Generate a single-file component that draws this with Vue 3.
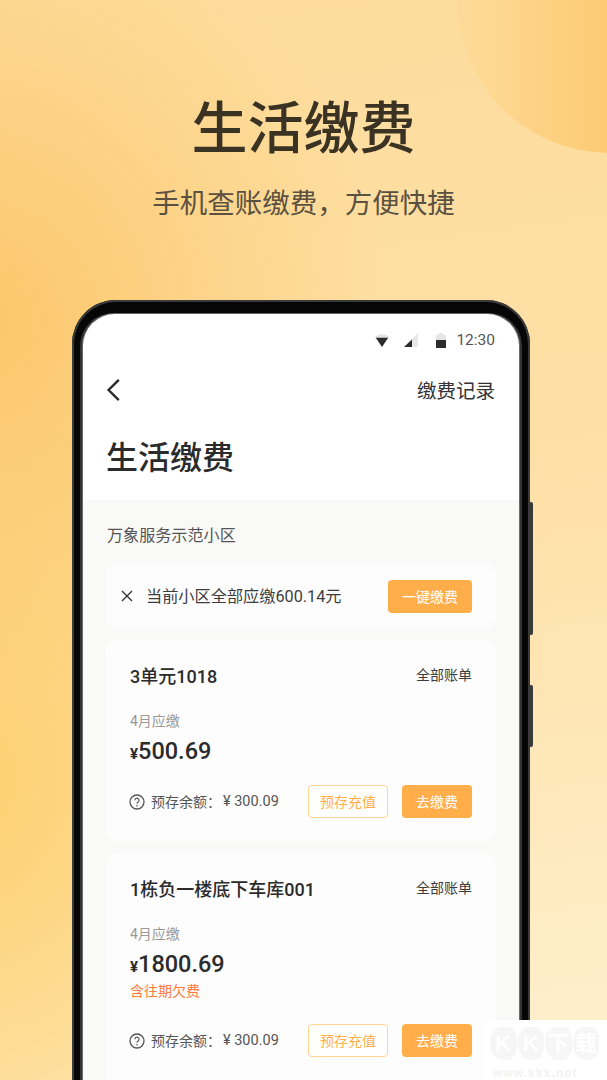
<script setup>
const cards = [
  { name: '3单元1018', amount: '500.69', overdue: false },
  { name: '1栋负一楼底下车库001', amount: '1800.69', overdue: true },
]
const markChars = ['K', 'K', '下', '载']
</script>

<template>
  <div class="page">
    <div class="sun"></div>
    <header class="hero">
      <h1>生活缴费</h1>
      <p>手机查账缴费&#65292;方便快捷</p>
    </header>
    <div class="phone">
      <i class="key key-a"></i>
      <i class="key key-b"></i>
      <div class="screen">
        <div class="status">
          <svg width="14" height="13" viewBox="0 0 14 13"><path d="M0 3C4-.6 10-.6 14 3l-1 1.500H1z" fill="#e4e4e4"/><path d="M.8 3.800h12.400L7 13z" fill="#2c2c2c"/></svg>
          <svg class="signal" width="14" height="14" viewBox="0 0 14 14"><path d="M14 0v14H0z" fill="#e8e8e8"/><path d="M8 6.500V14H0z" fill="#2c2c2c"/></svg>
          <svg class="battery" width="10" height="15" viewBox="0 0 10 15"><path d="M3 0h4v2h3v13H0V2h3z" fill="#e4e4e4"/><path d="M0 7h10v8H0z" fill="#2c2c2c"/></svg>
          <span class="time">12:30</span>
        </div>
        <nav class="nav">
          <svg width="14" height="24" viewBox="0 0 14 24"><path d="M12.800 1.800L2.600 12l10.200 10.200" fill="none" stroke="#2a2a2a" stroke-width="2.400"/></svg>
          <span>缴费记录</span>
        </nav>
        <h2 class="title">生活缴费</h2>
        <section class="body">
          <div class="community">万象服务示范小区</div>
          <div class="card notice">
            <svg width="12" height="12" viewBox="0 0 12 12"><path d="M1 1l10 10M11 1L1 11" stroke="#333" stroke-width="1.400"/></svg>
            <span class="notice-text">当前小区全部应缴600.14元</span>
            <button class="btn solid wide">一键缴费</button>
          </div>
          <article v-for="c in cards" :key="c.name" class="card bill" :class="{ tall: c.overdue }">
            <div class="bill-head">
              <strong>{{ c.name }}</strong>
              <span>全部账单</span>
            </div>
            <div class="month">4月应缴</div>
            <div class="amount"><small>¥</small>{{ c.amount }}</div>
            <div v-if="c.overdue" class="overdue">含往期欠费</div>
            <div class="bill-foot">
              <svg class="help" width="16" height="16" viewBox="0 0 16 16"><circle cx="8" cy="8" r="7" fill="none" stroke="#555" stroke-width="1.300"/><path d="M5.900 6.300a2.100 2.100 0 1 1 3.300 1.700c-.8.500-1.200.9-1.200 1.700" fill="none" stroke="#555" stroke-width="1.200"/><circle cx="8" cy="11.700" r=".8" fill="#555"/></svg>
              <span class="balance">预存余额&#65306;</span>
              <span class="balance-num">¥ 300.09</span>
              <button class="btn ghost">预存充值</button>
              <button class="btn solid">去缴费</button>
            </div>
          </article>
        </section>
      </div>
    </div>
    <div class="mark">
      <div class="mark-row">
        <span v-for="(m, i) in markChars" :key="i" class="blob">{{ m }}</span>
      </div>
      <div class="mark-url">www.kkx.net</div>
    </div>
  </div>
</template>

<style>
html, body { margin: 0; }
</style>

<style scoped>
.page {
  position: relative;
  width: 607px;
  height: 1080px;
  overflow: hidden;
  font-family: Roboto, "Noto Sans CJK SC", sans-serif;
  background:
    radial-gradient(ellipse 420px 420px at -30px 320px, #fcc66a 0%, rgba(252, 200, 110, .65) 40%, rgba(253, 215, 140, 0) 100%),
    radial-gradient(ellipse 420px 560px at -30px 780px, #fdd071 0%, rgba(253, 212, 124, .7) 45%, rgba(253, 224, 164, 0) 100%),
    linear-gradient(172deg, #fddc9c 0%, #fee1a8 50%, #fef0cf 100%);
}
.sun {
  position: absolute;
  left: 457px;
  top: -153px;
  width: 306px;
  height: 306px;
  border-radius: 50%;
  background: linear-gradient(90deg, #fedb9a 0%, #fdca72 50%);
}
.hero { position: relative; padding-top: 93px; text-align: center; color: #3a3222; }
.hero h1 { margin: 0; font-size: 56px; line-height: 72px; font-weight: 500; }
.hero p { margin: 19px 0 0; font-size: 27.500px; line-height: 40px; color: #5b5140; font-weight: 400; }
.phone {
  position: relative;
  margin: 76px 0 0 72px;
  width: 458px;
  height: 900px;
  box-sizing: border-box;
  padding: 14px 11px 0;
  background: #060606;
  border-radius: 44px 44px 0 0;
  box-shadow: inset 0 0 0 2px #3a3a3a;
}
.key { position: absolute; right: -3px; width: 3px; background: #3a3a3a; border-radius: 0 2px 2px 0; }
.key-a { top: 202px; height: 133px; }
.key-b { top: 385px; height: 62px; }
.screen { height: 100%; background: #fff; border-radius: 32px 32px 0 0; overflow: hidden; color: #2b2b2b; box-shadow: 0 0 0 1px #6a6a6a, 0 1px 0 1px #6a6a6a, 2px 0 0 1px #333, -2px 0 0 1px #333; }
.status { height: 52px; padding: 0 24px 0 0; display: flex; align-items: center; justify-content: flex-end; box-sizing: border-box; }
.signal { margin-left: 15px; }
.battery { margin-left: 18px; }
.time { margin-left: 10px; font: 400 15.500px/20px Roboto, sans-serif; color: #555; }
.nav { height: 48px; display: flex; align-items: center; justify-content: space-between; padding: 0 24px 0 23px; font-size: 19.500px; color: #333; }
.nav span { padding-bottom: 2px; }
.title { margin: 22px 0 0 23px; font-size: 32px; line-height: 44px; font-weight: 500; color: #2b2b2b; }
.body { margin-top: 20px; padding: 24px 23px 0; background: #f9f9f7; height: 600px; }
.community { margin-left: 1px; font-size: 16.100px; line-height: 24px; color: #555; }
.card { background: #fdfdfd; border-radius: 12px; box-sizing: border-box; }
.notice { margin-top: 15px; height: 66px; padding: 0 24px 0 15px; display: flex; align-items: center; }
.notice-text { margin-left: 13px; padding-bottom: 2px; flex: 1; font-size: 16.200px; color: #3d3d3d; }
.btn { box-sizing: border-box; height: 33px; border: 0; border-radius: 4px; padding: 0 0 1px; font: 400 14px/20px "Noto Sans CJK SC", sans-serif; }
.solid { width: 70px; background: #ffae4a; color: #fff; }
.wide { width: 84px; }
.ghost { width: 80px; background: #fff; color: #ffae4a; border: 1px solid #ffd48f; margin-right: 14px; }
.bill { margin-top: 11px; height: 201px; padding: 22px 24px 0; }
.bill + .bill { margin-top: 12px; }
.bill.tall { height: 240px; }
.bill-head { display: flex; justify-content: space-between; align-items: center; height: 26px; }
.bill-head strong { font-size: 18px; font-weight: 500; color: #2b2b2b; }
.bill-head span { padding-bottom: 2px; font-size: 14px; color: #3d3d3d; }
.month { margin-top: 23px; font-size: 14px; line-height: 20px; color: #999; }
.amount { margin-top: 4px; height: 32px; font: 500 23.500px/32px Roboto, sans-serif; color: #2b2b2b; }
.amount small { font-size: 15px; font-weight: 700; }
.overdue { margin-top: 1px; font-size: 14px; line-height: 20px; color: #ff7a3d; }
.bill-foot { margin-top: 18px; display: flex; align-items: center; height: 33px; }
.bill.tall .bill-foot { margin-top: 23px; }
.help { margin-left: -1px; }
.balance { margin-left: 6px; padding-bottom: 2px; font-size: 14px; color: #555; }
.balance-num { margin-left: 2px; flex: 1; font-size: 14.500px; color: #555; }
.mark { position: absolute; right: 0; bottom: 0; width: 121px; height: 60px; box-sizing: border-box; padding: 7px 8px 0 4px; background: #fff; color: #f2f2f2; font-family: "Liberation Sans", "Noto Sans CJK SC", sans-serif; font-weight: 700; }
.mark-row { display: flex; gap: 1px; }
.blob { width: 27px; height: 33px; background: #f6f6f6; color: #fff; border-radius: 45% 35% 40% 50%; font-size: 22px; line-height: 33px; text-align: center; }
.mark-url { margin: 7px 0 0 3px; font-size: 12px; line-height: 12px; letter-spacing: 1.100px; white-space: nowrap; }
</style>
